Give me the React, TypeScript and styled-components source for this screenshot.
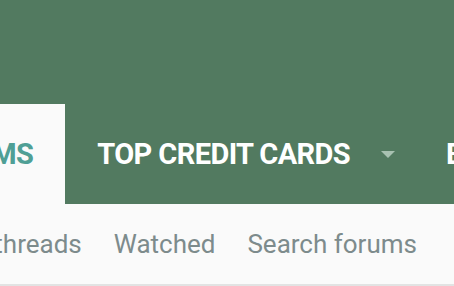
import styled, { createGlobalStyle } from 'styled-components';

const GlobalStyle = createGlobalStyle`
  html, body {
    margin: 0;
    padding: 0;
    background: #fafafa;
    overflow: hidden;
  }
  body {
    font-family: Roboto, "Liberation Sans", sans-serif;
  }
`;

const Header = styled.header`
  background: #527a60;
  padding-top: 104px;
  overflow: hidden;
`;

const Tabs = styled.nav`
  display: flex;
  align-items: stretch;
  height: 100px;
  margin-left: -112px;
  white-space: nowrap;
`;

const Tab = styled.a<{ $active?: boolean; $menu?: boolean }>`
  display: flex;
  align-items: center;
  gap: 31px;
  padding: 0 ${(p) => (p.$menu ? '19px' : '32px')} 0 32px;
  font-size: 29px;
  font-weight: 700;
  letter-spacing: -0.6px;
  text-decoration: none;
  color: ${(p) => (p.$active ? '#4f9f95' : '#ffffff')};
  background: ${(p) => (p.$active ? '#fafafa' : 'transparent')};
`;

const Caret = styled.span`
  width: 0;
  height: 0;
  border-left: 7px solid transparent;
  border-right: 7px solid transparent;
  border-top: 7px solid #a8c1b1;
`;

const SubNav = styled.div`
  display: flex;
  align-items: center;
  gap: 32px;
  height: 80px;
  margin-left: -64px;
  border-bottom: 2px solid #e2e3e3;
  white-space: nowrap;
`;

const SubLink = styled.a`
  font-size: 26px;
  color: #7d8b8c;
  text-decoration: none;
`;

export default function App() {
  return (
    <>
      <GlobalStyle />
      <Header>
        <Tabs>
          <Tab $active>FORUMS</Tab>
          <Tab $menu>
            TOP CREDIT CARDS
            <Caret />
          </Tab>
          <Tab>BANKING</Tab>
        </Tabs>
      </Header>
      <SubNav>
        <SubLink>New threads</SubLink>
        <SubLink>Watched</SubLink>
        <SubLink>Search forums</SubLink>
      </SubNav>
    </>
  );
}
